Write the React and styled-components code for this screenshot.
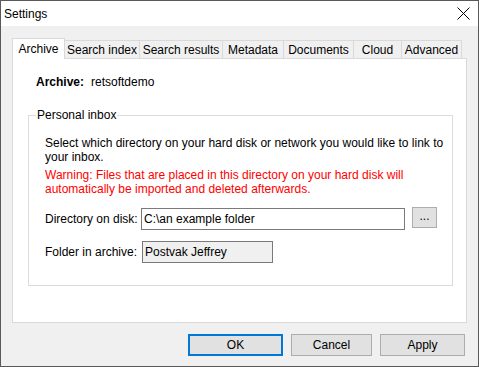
import React from 'react';
import styled, { createGlobalStyle } from 'styled-components';

const GlobalStyle = createGlobalStyle`
    body {
        margin: 0;
        font-family: "Liberation Sans", Arial, sans-serif;
        font-size: 12px;
        color: #000;
    }
`

const Window = styled.div`
    width: 479px;
    height: 367px;
    box-sizing: border-box;
    border: 1px solid #595959;
    display: flex;
    flex-direction: column;
    background: #f0f0f0;
`

const TitleBar = styled.div`
    height: 25px;
    flex-shrink: 0;
    background: #fff;
    display: flex;
    align-items: center;
    justify-content: space-between;
    padding: 0 8px 0 3px;
    line-height: 16px;
`

const CloseIcon = () => <svg width="13" height="13" viewBox="0 0 13 13">
    <path d="M0.5 0.5 L12.5 12.5 M12.5 0.5 L0.5 12.5" stroke="#000" strokeWidth="1" fill="none" />
</svg>

const Body = styled.div`
    flex: 1;
    display: flex;
    flex-direction: column;
    padding: 12px 11px 10px 11px;
`

const TabList = styled.div`
    height: 20px;
    display: flex;
    align-items: flex-end;
    flex-shrink: 0;
`

const Tab = styled.div`
    box-sizing: border-box;
    width: ${p => p.$width}px;
    height: ${p => p.$active ? 21 : 18}px;
    margin-left: ${p => p.$first ? 0 : -1}px;
    margin-bottom: ${p => p.$active ? -1 : 0}px;
    border: 1px solid #d9d9d9;
    border-bottom: 0;
    background: ${p => p.$active ? '#fff' : '#f0f0f0'};
    position: relative;
    z-index: ${p => p.$active ? 1 : 0};
    display: flex;
    align-items: center;
    justify-content: center;
    padding-top: ${p => p.$active ? 0 : 1}px;
    white-space: nowrap;
`

const Panel = styled.div`
    flex: 1;
    border: 1px solid #d9d9d9;
    background: #fff;
    padding: 15px 13px 0 15px;
    display: flex;
    flex-direction: column;
`

const ArchiveRow = styled.div`
    display: flex;
    line-height: 16px;
    margin-left: 8px;

    b {
        width: 55px;
    }
`

const Group = styled.fieldset`
    margin: 17px 0 0;
    padding: 0;
    border: 1px solid #dcdcdc;
    min-width: 0;
`

const Legend = styled.legend`
    margin-left: 7px;
    padding: 0 1px;
    line-height: 16px;
`

const GroupBody = styled.div`
    padding: 13px 12px 22px 16px;
    line-height: 14px;
`

const Note = styled.p`
    margin: 0;
    white-space: nowrap;
    color: ${p => p.$warning ? '#ff0000' : '#000'};
    & + & {
        margin-top: 4px;
    }
`

const FieldRow = styled.div`
    display: grid;
    grid-template-columns: 96px auto 1fr;
    align-items: center;
    margin-top: ${p => p.$top}px;
`

const TextBox = styled.input`
    box-sizing: border-box;
    width: ${p => p.$width}px;
    height: 22px;
    margin: 0 0 0 ${p => p.$offset || 0}px;
    border: 1px solid #7a7a7a;
    border-radius: 0;
    background: ${p => p.readOnly ? '#f0f0f0' : '#fff'};
    padding: 0 2px;
    font: inherit;
    color: #000;
    outline: none;
`

const SmallButton = styled.button`
    box-sizing: border-box;
    width: 25px;
    height: 21px;
    margin: 0 0 0 7px;
    align-self: start;
    margin-top: -1px;
    border: 1px solid #adadad;
    background: #e1e1e1;
    font: inherit;
    padding: 0 0 3px;
    color: #000;
`

const ButtonRow = styled.div`
    display: flex;
    justify-content: flex-end;
    gap: 8px;
    margin-top: 11px;
    padding-right: 2px;
`

const DialogButton = styled.button`
    box-sizing: border-box;
    width: ${p => p.$width}px;
    height: 22px;
    border: ${p => p.$primary ? '2px solid #0078d7' : '1px solid #adadad'};
    background: #e1e1e1;
    font: inherit;
    color: #000;
    padding: 0;
`

const tabs = [
    ['Archive', 53],
    ['Search index', 76],
    ['Search results', 84],
    ['Metadata', 62],
    ['Documents', 71],
    ['Cloud', 49],
    ['Advanced', 61],
];

export default function App() {
    return <>
        <GlobalStyle />
        <Window>
            <TitleBar>
                <span>Settings</span>
                <CloseIcon />
            </TitleBar>
            <Body>
                <TabList>
                    {tabs.map(([name, w], i) =>
                        <Tab key={name} $width={w} $first={i === 0} $active={i === 0}>{name}</Tab>
                    )}
                </TabList>
                <Panel>
                    <ArchiveRow>
                        <b>Archive:</b>
                        <span>retsoftdemo</span>
                    </ArchiveRow>
                    <Group>
                        <Legend>Personal inbox</Legend>
                        <GroupBody>
                            <Note>Select which directory on your hard disk or network you would like to link to<br />your inbox.</Note>
                            <Note $warning>Warning: Files that are placed in this directory on your hard disk will<br />automatically be imported and deleted afterwards.</Note>
                            <FieldRow $top={12}>
                                <span>Directory on disk:</span>
                                <TextBox $width={264} defaultValue="C:\an example folder" />
                                <SmallButton>...</SmallButton>
                            </FieldRow>
                            <FieldRow $top={11}>
                                <span>Folder in archive:</span>
                                <TextBox $width={131} $offset={1} readOnly defaultValue="Postvak Jeffrey" />
                            </FieldRow>
                        </GroupBody>
                    </Group>
                </Panel>
                <ButtonRow>
                    <DialogButton $primary $width={95}>OK</DialogButton>
                    <DialogButton $width={81}>Cancel</DialogButton>
                    <DialogButton $width={85}>Apply</DialogButton>
                </ButtonRow>
            </Body>
        </Window>
    </>
}
